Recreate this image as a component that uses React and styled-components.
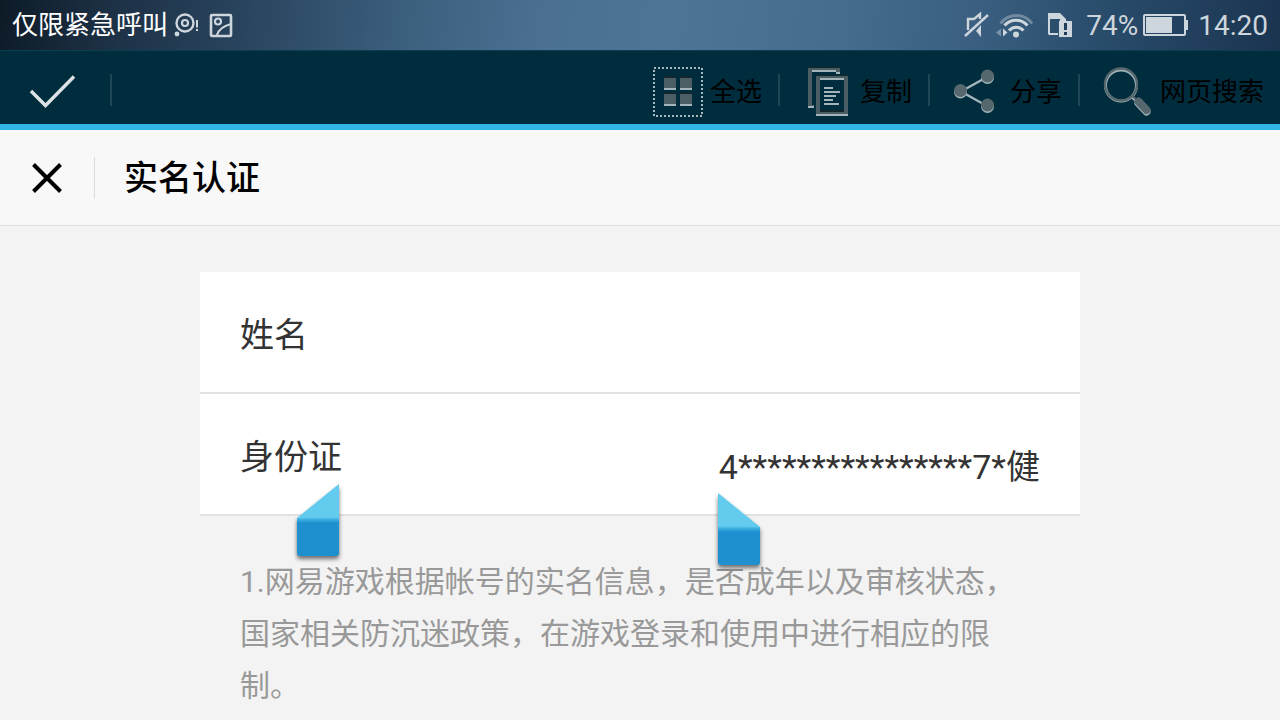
import styled, { createGlobalStyle } from "styled-components";

const GlobalStyle = createGlobalStyle`
  * {
    box-sizing: border-box;
  }
  body {
    margin: 0;
    background-color: #f3f3f3;
    font-family: Roboto, "Noto Sans CJK SC", sans-serif;
    overflow: hidden;
  }
`;

const StatusBar = styled.div`
  display: flex;
  align-items: center;
  justify-content: space-between;
  height: 50px;
  padding: 0 12px;
  color: #cdd5dd;
  background: linear-gradient(
    98deg,
    #0d1b27 0%,
    #1d3146 9%,
    #2a4660 20%,
    #3b5e7c 31%,
    #4a6f91 42%,
    #4e7596 52%,
    #456c8d 66%,
    #3a5f80 76%,
    #284a69 87%,
    #1a3450 100%
  );
`;
const StatusGroup = styled.div`
  display: flex;
  align-items: center;
  gap: ${(props) => props.$gap}px;
  font-size: 28px;
  line-height: 32px;
`;
const Carrier = styled.span`
  color: #fff;
  font-size: 26px;
`;
const Power = styled.span`
  display: flex;
  align-items: center;
  gap: 4px;
`;
const Clock = styled.time`
  padding-top: 2px;
`;
const Percent = styled.span`
  padding-top: 2px;
`;

const ActionBar = styled.div`
  display: flex;
  align-items: center;
  justify-content: space-between;
  height: 80px;
  padding-top: 4px;
  background-color: #002d3d;
  border-top: 1px solid #0c4050;
  border-bottom: 6px solid #33b5e5;
`;
const ActionGroup = styled.div`
  display: flex;
  align-items: center;
`;
const Divider = styled.span`
  width: ${(props) => props.$width}px;
  height: ${(props) => props.$height}px;
  background-color: ${(props) => props.$color};
`;
const PlainButton = styled.button`
  display: flex;
  align-items: center;
  border: 0;
  background: none;
  font: inherit;
  color: #000;
`;
const DoneButton = styled(PlainButton)`
  padding: 2px 32px 0 26px;
`;
const ActionButton = styled(PlainButton)`
  gap: 7px;
  padding: 4px 16px 0 23px;
  font-size: 26px;
  line-height: 32px;
`;

const TitleBar = styled.header`
  display: flex;
  align-items: center;
  height: 96px;
  background-color: #f8f8f8;
  border-bottom: 1px solid #dedede;
`;
const CloseButton = styled(PlainButton)`
  padding: 0 30px;
`;
const Title = styled.h1`
  margin: 0 29px;
  font-size: 34px;
  line-height: 40px;
  font-weight: 500;
  color: #000;
`;

const Main = styled.main`
  max-width: 880px;
  margin: 46px auto 0;
`;
const Row = styled.div`
  position: relative;
  display: flex;
  align-items: flex-start;
  height: 122px;
  padding: 41px 40px 0;
  background-color: #fff;
  border-bottom: 2px solid #e2e2e2;
  color: #333;
  font-size: 34px;
  line-height: 44px;
`;
const Label = styled.label`
  flex: none;
`;
const Field = styled.input`
  flex: 1;
  min-width: 0;
  height: 58px;
  padding: 0;
  border: 0;
  outline: 0;
  background: none;
  color: inherit;
  font: inherit;
  text-align: right;
`;
const Note = styled.p`
  margin: 0;
  padding: 40px;
  color: #999;
  font-size: 30px;
  line-height: 52px;
`;

/* Los marcadores de selección flotan sobre el formulario */
const Handle = styled.svg`
  position: absolute;
  z-index: 1;
  overflow: visible;
  filter: drop-shadow(0 3px 2px rgba(0, 0, 0, 0.55));
`;
const StartHandle = styled(Handle)`
  top: 90px;
  left: 97px;
`;
const EndHandle = styled(Handle)`
  top: 99px;
  right: 320px;
`;

function MessageIcon() {
  return (
    <svg width="26" height="26" viewBox="0 0 26 26" fill="none" stroke="currentColor">
      <circle cx="12" cy="11" r="8.5" strokeWidth="2.4" />
      <circle cx="12" cy="11" r="3" strokeWidth="2.2" />
      <circle cx="4" cy="22" r="2.4" fill="currentColor" stroke="none" />
      <path d="M24 8v7.5M24 17v2" strokeWidth="2" />
    </svg>
  );
}

function PictureIcon() {
  return (
    <svg width="24" height="26" viewBox="0 0 24 26" fill="none" stroke="currentColor" strokeWidth="2.2">
      <rect x="2" y="3" width="20" height="21" rx="1" strokeWidth="2.6" />
      <circle cx="9" cy="9.5" r="3" />
      <path d="M8 23C9.500 18 14 14 22 12" />
    </svg>
  );
}

function MuteIcon() {
  return (
    <svg width="26" height="28" viewBox="0 0 26 28" fill="none" stroke="currentColor" strokeWidth="2.4">
      <path d="M5 19V8h6l6-5v5" />
      <path d="M2 25L25 4" />
      <path d="M18 14v12l-5-6z" fill="currentColor" stroke="none" />
    </svg>
  );
}

function WifiIcon() {
  return (
    <svg width="38" height="28" viewBox="0 0 38 28" fill="none" stroke="currentColor" strokeWidth="3">
      <path d="M4.500 12.500C12.500 1.800 28.500 1.800 36 12.500" opacity="0.4" />
      <path d="M8.500 14.500C14.500 7.500 25.500 7.500 31.500 14.500" />
      <path d="M13 19.500C17 15 23.500 15 27.500 19.500" />
      <circle cx="20" cy="23.500" r="3" fill="currentColor" stroke="none" />
      <path d="M5 17.500v8L0 21.500z" fill="currentColor" stroke="none" opacity="0.45" />
      <path d="M7 17.500v8l4.500-4z" fill="currentColor" stroke="none" />
    </svg>
  );
}

function SimIcon() {
  return (
    <svg width="26" height="28" viewBox="0 0 26 28">
      <path d="M1 2h12l6 6v3H3v11h8v2H2l-1-1z" fill="currentColor" />
      <path d="M3 8h10v4h-2v10H3z" fill="#2b4e6d" />
      <rect x="12" y="10" width="13" height="16" fill="currentColor" />
      <path d="M18.500 12v7M18.500 21v3" stroke="#1f3d58" strokeWidth="3" />
    </svg>
  );
}

function BatteryIcon() {
  return (
    <svg width="46" height="24" viewBox="0 0 46 24">
      <rect x="2" y="2" width="41" height="20" rx="1" fill="none" stroke="currentColor" strokeWidth="2" />
      <rect x="4" y="4" width="26" height="16" fill="currentColor" />
      <rect x="44" y="7" width="2" height="10" fill="currentColor" />
    </svg>
  );
}

function CheckIcon() {
  return (
    <svg width="52" height="40" viewBox="0 0 52 40" fill="none" stroke="#dde3e5" strokeWidth="3.4">
      <path d="M5 20L19.500 34.500L48 5.500" />
    </svg>
  );
}

function CloseIcon() {
  return (
    <svg width="34" height="34" viewBox="0 0 34 34" fill="none" stroke="#000" strokeWidth="4">
      <path d="M3.500 3.500L30.500 30.500M30.500 3.500L3.500 30.500" />
    </svg>
  );
}

function SelectAllIcon() {
  return (
    <svg width="50" height="50" viewBox="0 0 50 50">
      <rect x="1" y="1" width="48" height="48" fill="none" stroke="#a9b8bd" strokeWidth="2" strokeDasharray="2 2" />
      {[
        [11, 10],
        [27, 10],
        [11, 26],
        [27, 26],
      ].map(([x, y]) => (
        <g key={`${x}-${y}`}>
          <rect x={x} y={y - 1} width="12" height="2" fill="#14272e" />
          <rect x={x} y={y + 1} width="12" height="10" fill="#4c5e65" />
          <rect x={x} y={y + 11} width="12" height="2" fill="#a3b5bb" />
        </g>
      ))}
    </svg>
  );
}

function CopyIcon() {
  return (
    <svg width="50" height="50" viewBox="0 0 50 50" fill="none">
      <path d="M5 0h32v2H5z" fill="#14272e" />
      <path d="M5 1h32v5h-4V5H9v33h2v2H5z" fill="#4c5e65" />
      <path d="M9 3h24v2H9zM33 5h4v2h-4zM5 39h6v2H5z" fill="#a3b5bb" />
      <path d="M13 8h32v2H13z" fill="#14272e" />
      <path d="M13 9h32v39H13zM17 13v31h24V13z" fill="#4c5e65" fillRule="evenodd" />
      <path d="M17 11h24v2H17zM13 47h32v2H13z" fill="#a3b5bb" />
      <path d="M17 43h24v2H17z" fill="#14272e" />
      <path
        d="M21 21h9M21 25h16M21 29h12M21 33h9M21 37h15"
        stroke="#a3b5bb"
        strokeWidth="2"
      />
    </svg>
  );
}

function ShareIcon() {
  return (
    <svg width="50" height="50" viewBox="0 0 50 50">
      <g fill="#a3b5bb" stroke="#a3b5bb" strokeWidth="2.4">
        <path d="M34 10L8 24.500L34 39" fill="none" />
        <g stroke="none">
          <circle cx="34.500" cy="10.500" r="6.500" />
          <circle cx="7.500" cy="25" r="6.500" />
          <circle cx="34.500" cy="39.500" r="6.500" />
        </g>
      </g>
      <g fill="#56676d">
        <circle cx="34.500" cy="9" r="6.500" />
        <circle cx="7.500" cy="23.500" r="6.500" />
        <circle cx="34.500" cy="38" r="6.500" />
      </g>
    </svg>
  );
}

function SearchIcon() {
  return (
    <svg width="50" height="50" viewBox="0 0 50 50" fill="none">
      <g stroke="#a3b5bb">
        <circle cx="18" cy="18.500" r="15.500" strokeWidth="3" />
        <path d="M28.500 29.500l5 5" strokeWidth="3" />
        <path d="M35.500 36L43.500 44.500" strokeWidth="8" strokeLinecap="round" />
      </g>
      <g stroke="#56676d">
        <circle cx="18" cy="17.500" r="16" strokeWidth="2.4" />
        <path d="M29.500 29l5 5" strokeWidth="2" />
        <path d="M35.500 34.500L43.500 43" strokeWidth="8" strokeLinecap="round" />
      </g>
    </svg>
  );
}

function HandleGradient({ id }) {
  return (
    <linearGradient id={id} x1="0" y1="0" x2="0" y2="1">
      <stop offset="0.46" stopColor="#63ccee" />
      <stop offset="0.49" stopColor="#3fb2e2" />
      <stop offset="0.54" stopColor="#1e90d0" />
    </linearGradient>
  );
}

const actions = [
  { label: "全选", Icon: SelectAllIcon },
  { label: "复制", Icon: CopyIcon },
  { label: "分享", Icon: ShareIcon },
  { label: "网页搜索", Icon: SearchIcon },
];

export default function App() {
  return (
    <>
      <GlobalStyle />
      <StatusBar>
        <StatusGroup $gap={10}>
          <StatusGroup $gap={5}>
            <Carrier>仅限紧急呼叫</Carrier>
            <MessageIcon />
          </StatusGroup>
          <PictureIcon />
        </StatusGroup>
        <StatusGroup $gap={10}>
          <StatusGroup $gap={13}>
            <StatusGroup $gap={7}>
              <MuteIcon />
              <WifiIcon />
            </StatusGroup>
            <SimIcon />
            <Power>
              <Percent>74%</Percent>
              <BatteryIcon />
            </Power>
          </StatusGroup>
          <Clock>14:20</Clock>
        </StatusGroup>
      </StatusBar>

      <ActionBar>
        <ActionGroup>
          <DoneButton aria-label="完成">
            <CheckIcon />
          </DoneButton>
          <Divider $width={2} $height={32} $color="#1f4654" />
        </ActionGroup>
        <ActionGroup>
          {actions.map(({ label, Icon }, index) => (
            <ActionGroup key={label}>
              {index > 0 && <Divider $width={2} $height={32} $color="#1f4654" />}
              <ActionButton>
                <Icon />
                {label}
              </ActionButton>
            </ActionGroup>
          ))}
        </ActionGroup>
      </ActionBar>

      <TitleBar>
        <CloseButton aria-label="关闭">
          <CloseIcon />
        </CloseButton>
        <Divider $width={1} $height={42} $color="#dcdcdc" />
        <Title>实名认证</Title>
      </TitleBar>

      <Main>
        <Row>
          <Label htmlFor="name">姓名</Label>
          <Field id="name" type="text" />
        </Row>
        <Row>
          <Label htmlFor="idCard">身份证</Label>
          <Field id="idCard" type="text" defaultValue="4****************7*健" />
          <StartHandle width="42" height="72" viewBox="0 0 42 72">
            <HandleGradient id="startFill" />
            <path d="M42 0V69a3 3 0 0 1-3 3H3a3 3 0 0 1-3-3V34z" fill="url(#startFill)" />
          </StartHandle>
          <EndHandle width="42" height="72" viewBox="0 0 42 72">
            <HandleGradient id="endFill" />
            <path d="M0 0V69a3 3 0 0 0 3 3H39a3 3 0 0 0 3-3V34z" fill="url(#endFill)" />
          </EndHandle>
        </Row>
        <Note>
          1.网易游戏根据帐号的实名信息，是否成年以及审核状态，国家相关防沉迷政策，在游戏登录和使用中进行相应的限制。
        </Note>
      </Main>
    </>
  );
}
